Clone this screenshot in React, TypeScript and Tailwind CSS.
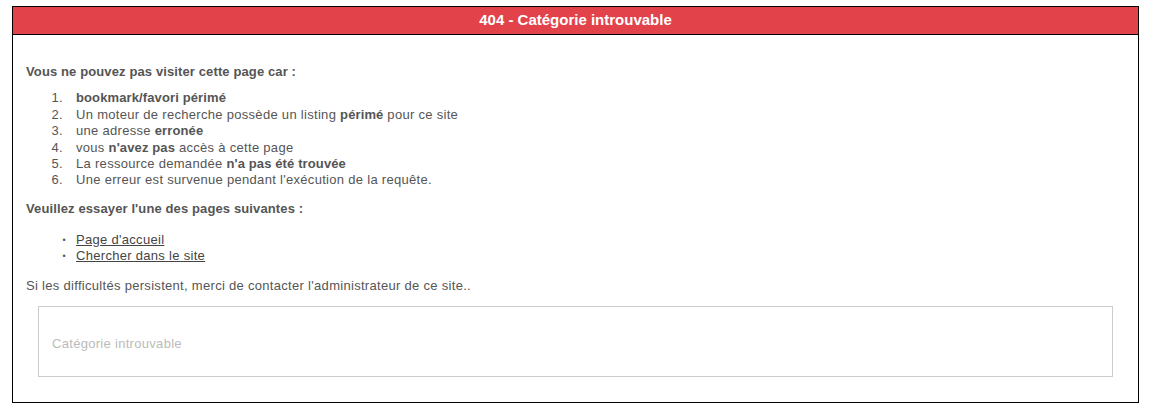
const reasons = [
  { n: '1.', parts: [{ b: true, t: 'bookmark/favori périmé' }] },
  { n: '2.', parts: [{ t: 'Un moteur de recherche possède un listing ' }, { b: true, t: 'périmé' }, { t: ' pour ce site' }] },
  { n: '3.', parts: [{ t: 'une adresse ' }, { b: true, t: 'erronée' }] },
  { n: '4.', parts: [{ t: 'vous ' }, { b: true, t: "n'avez pas" }, { t: ' accès à cette page' }] },
  { n: '5.', parts: [{ t: 'La ressource demandée ' }, { b: true, t: "n'a pas été trouvée" }] },
  { n: '6.', parts: [{ t: "Une erreur est survenue pendant l'exécution de la requête." }] }
]

const links = ["Page d'accueil", 'Chercher dans le site']

export default function App() {
  return (
    <div className="bg-white w-[1150px] h-[414px] pt-[6px] pl-[12px] font-['Liberation_Sans',Arial,sans-serif] text-[13px] text-[#555555] tracking-[0.3px]">
      <div className="w-[1127px] h-[397px] border border-black flex flex-col">
        <div className="h-[28px] bg-[#e2434b] border-b border-black flex items-center justify-center text-white font-bold text-[15px] tracking-normal">
          404 - Catégorie introuvable
        </div>
        <div className="flex-1 px-[13px] pt-[29px] leading-[16.4px]">
          <p className="font-bold tracking-[0.12px]">Vous ne pouvez pas visiter cette page car :</p>
          <ol className="mt-[10px]">
            {reasons.map((r) => (
              <li key={r.n} className="flex">
                <span className="w-[50px] shrink-0 text-right pr-[13px]">{r.n}</span>
                <span>
                  {r.parts.map((p, i) =>
                    p.b ? <b key={i} className="font-bold tracking-[0.12px]">{p.t}</b> : <span key={i}>{p.t}</span>
                  )}
                </span>
              </li>
            ))}
          </ol>
          <p className="font-bold tracking-[0.12px] mt-[12.6px]">Veuillez essayer l'une des pages suivantes :</p>
          <ul className="mt-[14px]">
            {links.map((l) => (
              <li key={l} className="flex">
                <span className="w-[50px] shrink-0 text-right pr-[10px] text-[9px]">•</span>
                <a href="#" className="underline text-[#444444]">{l}</a>
              </li>
            ))}
          </ul>
          <p className="mt-[13px]">Si les difficultés persistent, merci de contacter l'administrateur de ce site..</p>
          <div className="mt-[12px] mx-[12px] h-[71px] border border-[#cccccc] flex items-center pl-[13px] pt-[6px] text-[#bbbbbb]">
            Catégorie introuvable
          </div>
        </div>
      </div>
    </div>
  )
}
